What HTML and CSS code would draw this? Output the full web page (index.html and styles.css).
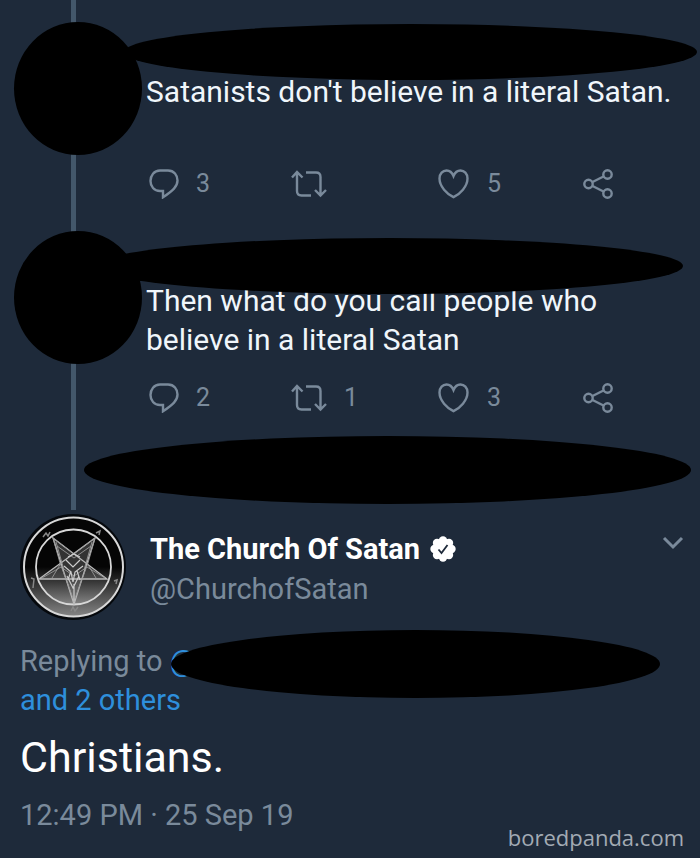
FILE: index.html
```
<!DOCTYPE html>
<html lang="en">

<head>
    <meta charset="UTF-8">
    <meta name="viewport" content="width=device-width, initial-scale=1.0">
    <title>The Church Of Satan</title>
    <link rel="stylesheet" href="styles.css">
</head>

<body>
    <svg class="sprite" aria-hidden="true">
        <symbol id="icon-reply" viewBox="0 0 30 30">
            <path d="M11 1.500h8C25 1.500 28.500 6 28.500 11.500c0 6-4.500 10-14.500 16.800v-6.300H11C5 22 1.500 17.500 1.500 12S5 1.500 11 1.500z" />
        </symbol>
        <symbol id="icon-retweet" viewBox="0 0 36 30">
            <path d="M1 8.500L6 3l5.500 5.500M6 3.500V22q0 4.500 4.500 4.500H20M15 3.500h10q4.500 0 4.500 4.500v18.500M24 21l5.500 5.500L35 21" />
        </symbol>
        <symbol id="icon-heart" viewBox="0 0 32 30">
            <path d="M15.500 28.200C9 25 1.500 17.500 1.500 9.500c0-5 3.300-8 7-8 3.200 0 5.600 2 7 5.500 1.400-3.500 3.800-5.500 7-5.500 3.700 0 7 3 7 8 0 8-7.500 15.500-14 18.700z" />
        </symbol>
        <symbol id="icon-share" viewBox="0 0 32 30">
            <circle cx="5.500" cy="15" r="4.200" />
            <circle cx="24.500" cy="5.500" r="4.200" />
            <circle cx="24.500" cy="24.500" r="4.200" />
            <path d="M9.500 13l11-5.500M9.500 17l11 5.500" />
        </symbol>
    </svg>

    <main class="page">
        <div class="thread">
            <article class="tweet tweet-short">
                <div class="avatar"></div>
                <div class="redacted redacted-name"></div>
                <div class="tweet-body">
                    <p class="tweet-text">Satanists don't believe in a literal Satan.</p>
                    <div class="actions">
                        <button type="button" aria-label="Reply"><svg width="30" height="30"><use href="#icon-reply" /></svg>3</button>
                        <button type="button" aria-label="Retweet"><svg width="36" height="30"><use href="#icon-retweet" /></svg></button>
                        <button type="button" aria-label="Like"><svg width="32" height="30"><use href="#icon-heart" /></svg>5</button>
                        <button type="button" aria-label="Share"><svg width="32" height="30"><use href="#icon-share" /></svg></button>
                    </div>
                </div>
            </article>

            <article class="tweet">
                <div class="avatar"></div>
                <div class="redacted redacted-reply"></div>
                <div class="tweet-body">
                    <p class="tweet-text">Then what do you call people who<br>believe in a literal Satan</p>
                    <div class="actions">
                        <button type="button" aria-label="Reply"><svg width="30" height="30"><use href="#icon-reply" /></svg>2</button>
                        <button type="button" aria-label="Retweet"><svg width="36" height="30"><use href="#icon-retweet" /></svg>1</button>
                        <button type="button" aria-label="Like"><svg width="32" height="30"><use href="#icon-heart" /></svg>3</button>
                        <button type="button" aria-label="Share"><svg width="32" height="30"><use href="#icon-share" /></svg></button>
                    </div>
                </div>
            </article>

            <div class="redacted-row"></div>
        </div>

        <article class="main-tweet">
            <header class="author">
                <svg class="logo" viewBox="0 0 106 106" role="img" aria-label="The Church Of Satan">
                    <defs>
                        <linearGradient id="shade" x1="0" y1="0" x2="0" y2="1">
                            <stop offset="0.5" stop-color="#050505" />
                            <stop offset="1" stop-color="#858585" />
                        </linearGradient>
                    </defs>
                    <circle cx="53" cy="53" r="53" fill="#05080c" />
                    <g fill="none" stroke="#d8d8d8">
                        <circle cx="53.500" cy="53" r="49.500" fill="url(#shade)" stroke-width="2" />
                        <circle cx="53.500" cy="53" r="37.500" fill="url(#shade)" stroke-width="1.800" />
                        <path d="M33 24l21 66 21-66-56 41h68z" fill="#777" fill-opacity="0.400" stroke="#bbb" stroke-width="1.300" />
                        <path d="M33 24l7 25 14 38 14-38 7-25-21 16zM37 32l17 12 17-12M22 64l19-11 13 9 13-9 18 11M36 28l8 28M72 28l-8 28M41 49l-9 15M67 49l9 15" stroke="#999" stroke-width="0.900" />
                        <path d="M46 46l7 7 7-7M44 52l7 6 2 10 2-10 8-6M47 62l6 12 6-12M51 57l-3 9M57 57l3 9M54 70v17M48 43l6-3 6 3" stroke="#ccc" stroke-width="1.200" />
                        <path d="M23 23l3-4 2 3 2-4M76 19l4-2-1 4M11 64l3 1-1 9M94 67l3-1-1 4M51 97l2-4 2 4 3-4" stroke="#888" stroke-width="1.500" />
                    </g>
                </svg>
                <div class="author-info">
                    <h1 class="author-name">The Church Of Satan
                        <svg class="verified" width="26" height="26" viewBox="0 0 26 26" aria-label="Verified">
                            <g fill="#fff">
                                <circle cx="13" cy="13" r="10" />
                                <circle cx="13" cy="4.500" r="4.200" />
                                <circle cx="19" cy="7" r="4.200" />
                                <circle cx="21.500" cy="13" r="4.200" />
                                <circle cx="19" cy="19" r="4.200" />
                                <circle cx="13" cy="21.500" r="4.200" />
                                <circle cx="7" cy="19" r="4.200" />
                                <circle cx="4.500" cy="13" r="4.200" />
                                <circle cx="7" cy="7" r="4.200" />
                            </g>
                            <path d="M8.500 13.500l3 3.500 6-8" fill="none" stroke="#1e2a3a" stroke-width="1.800" />
                        </svg>
                    </h1>
                    <p class="author-handle">@ChurchofSatan</p>
                </div>
                <button type="button" class="more" aria-label="More">
                    <svg width="22" height="14" viewBox="0 0 22 14">
                        <path d="M2 2l9 9 9-9" />
                    </svg>
                </button>
            </header>

            <div class="replying">
                Replying to <a href="#">@</a><br>
                <a href="#">and 2 others</a>
                <div class="redacted redacted-mention"></div>
            </div>
            <p class="answer">Christians.</p>
            <p class="date">12:49 PM · 25 Sep 19</p>
        </article>

        <div class="watermark">boredpanda.com</div>
    </main>
</body>

</html>
```
FILE: styles.css
```
:root {
    --bg: #1e2a3a;
    --line: #43576a;
    --text-primary: #f0f6fb;
    --text-secondary: #7a8a9b;
    --accent-blue: #2e8fdc;
}

* {
    margin: 0;
    padding: 0;
    box-sizing: border-box;
}

body {
    background: var(--bg);
    color: var(--text-primary);
    font-family: Roboto, "Liberation Sans", sans-serif;
    font-size: 29px;
    line-height: 39px;
}

a {
    color: var(--accent-blue);
    text-decoration: none;
}

button {
    border: none;
    background: none;
    color: inherit;
    font: inherit;
    cursor: pointer;
}

.sprite {
    display: none;
}

.page {
    position: relative;
    min-height: 100vh;
}

/* Thread */
.thread {
    position: relative;
    padding-bottom: 6px;
}

.thread::before {
    content: '';
    position: absolute;
    top: 0;
    bottom: 0;
    left: 71px;
    width: 5px;
    background: var(--line);
}

.tweet {
    position: relative;
    display: flex;
    gap: 4px;
    padding: 22px 0 10px 14px;
}

.avatar {
    position: relative;
    flex: none;
    width: 128px;
    height: 133px;
    border-radius: 50%;
    background: #000;
}

.tweet-body {
    flex: 1;
    padding-top: 50px;
}

.tweet-text {
    font-size: 30px;
}

.actions {
    display: grid;
    grid-template-columns: 142fr 147fr 145fr 117fr;
    margin-top: 24px;
    padding-left: 3px;
    color: var(--text-secondary);
    font-size: 25px;
    line-height: 30px;
}

.tweet-short .actions {
    margin-top: 58px;
}

.actions button {
    display: flex;
    align-items: center;
    gap: 17px;
}

.actions svg {
    fill: none;
    stroke: currentColor;
    stroke-width: 2.4px;
}

/* Blacked out names */
.redacted {
    position: absolute;
    border-radius: 50%;
    background: #000;
}

.redacted-name {
    top: 24px;
    left: 124px;
    right: 3px;
    height: 56px;
}

.redacted-reply {
    top: 29px;
    left: 96px;
    right: 17px;
    height: 56px;
}

.redacted-mention {
    top: -12px;
    left: 151px;
    right: 20px;
    height: 68px;
}

.redacted-row {
    position: relative;
    height: 68px;
    margin: 13px 9px 0 84px;
    border-radius: 50%;
    background: #000;
}

/* Main tweet */
.main-tweet {
    padding: 4px 20px 20px;
}

.author {
    display: flex;
    align-items: flex-start;
    gap: 24px;
}

.logo {
    flex: none;
    width: 106px;
    height: 106px;
}

.author-info {
    flex: 1;
    padding-top: 15px;
}

.author-name {
    display: flex;
    align-items: center;
    gap: 10px;
    color: #fff;
    font-size: 29px;
    font-weight: 700;
    line-height: 40px;
}

.author-handle {
    color: var(--text-secondary);
    font-size: 29px;
    line-height: 40px;
}

.more {
    margin-top: 22px;
    margin-right: -4px;
    line-height: 14px;
}

.more svg {
    display: block;
    fill: none;
    stroke: var(--text-secondary);
    stroke-width: 3px;
}

.replying {
    position: relative;
    margin-top: 22px;
    color: var(--text-secondary);
}

.answer {
    margin-top: 8px;
    color: #fff;
    font-size: 43px;
    line-height: 58px;
}

.date {
    margin-top: 10px;
    color: var(--text-secondary);
}

.watermark {
    position: absolute;
    right: 16px;
    bottom: 6px;
    color: #a3abb4;
    font-family: "Open Sans", "Noto Sans", sans-serif;
    font-size: 22px;
    line-height: 30px;
}
```
